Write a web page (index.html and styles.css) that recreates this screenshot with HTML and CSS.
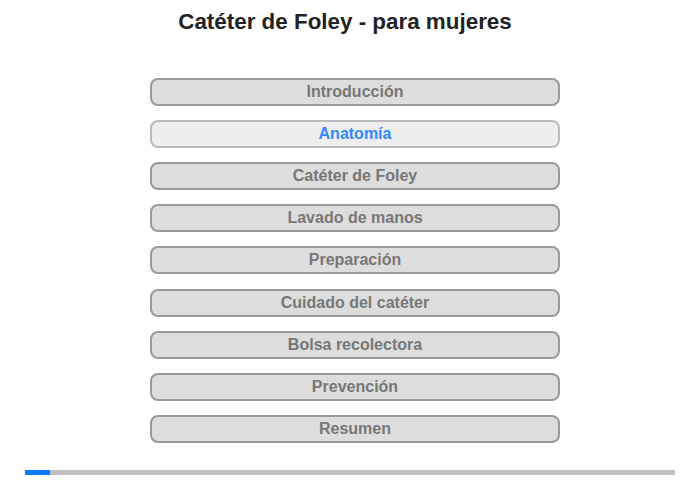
FILE: index.html
```html
<!DOCTYPE html>
<html lang="es">
<head>
    <meta charset="UTF-8">
    <meta name="viewport" content="width=device-width, initial-scale=1.0">
    <title>Catéter de Foley - para mujeres</title>
    <link rel="stylesheet" href="styles.css">
</head>
<body>
    <div class="page">
        <h1>Catéter de Foley - para mujeres</h1>

        <!-- Menu -->
        <div class="menu">
            <button class="menu-btn">Introducción</button>
            <button class="menu-btn active">Anatomía</button>
            <button class="menu-btn">Catéter de Foley</button>
            <button class="menu-btn">Lavado de manos</button>
            <button class="menu-btn">Preparación</button>
            <button class="menu-btn">Cuidado del catéter</button>
            <button class="menu-btn">Bolsa recolectora</button>
            <button class="menu-btn">Prevención</button>
            <button class="menu-btn">Resumen</button>
        </div>

        <div class="progress">
            <div class="progress-fill" style="width: 25px;"></div>
        </div>
    </div>
</body>
</html>
```

FILE: styles.css
```css
body {
    font-family: "Liberation Sans", Arial, sans-serif;
    margin: 0;
    background-color: #fff;
}

.page {
    width: 700px;
    height: 480px;
    display: flex;
    flex-direction: column;
    align-items: center;
}

h1 {
    font-size: 22.4px;
    font-weight: bold;
    color: #222;
    margin: 9px 10px 0 0;
    height: 26px;
    line-height: 26px;
}

.menu {
    display: flex;
    flex-direction: column;
    gap: 14.12px;
    margin: 43px 0 0 10px;
}

.menu-btn {
    box-sizing: border-box;
    width: 410px;
    height: 28px;
    padding: 0;
    font-family: "Liberation Sans", Arial, sans-serif;
    font-size: 16px;
    font-weight: bold;
    color: #777;
    background-color: #ddd;
    border: 2px solid #999;
    border-radius: 8px;
    cursor: pointer;
}

.menu-btn.active {
    color: #3388ff;
    background-color: #eee;
    border-color: #bbb;
}

.progress {
    width: 650px;
    height: 5px;
    margin-top: 27px;
    background-color: #c0c0c0;
}

.progress-fill {
    height: 100%;
    background-color: #0a7bff;
}
```
